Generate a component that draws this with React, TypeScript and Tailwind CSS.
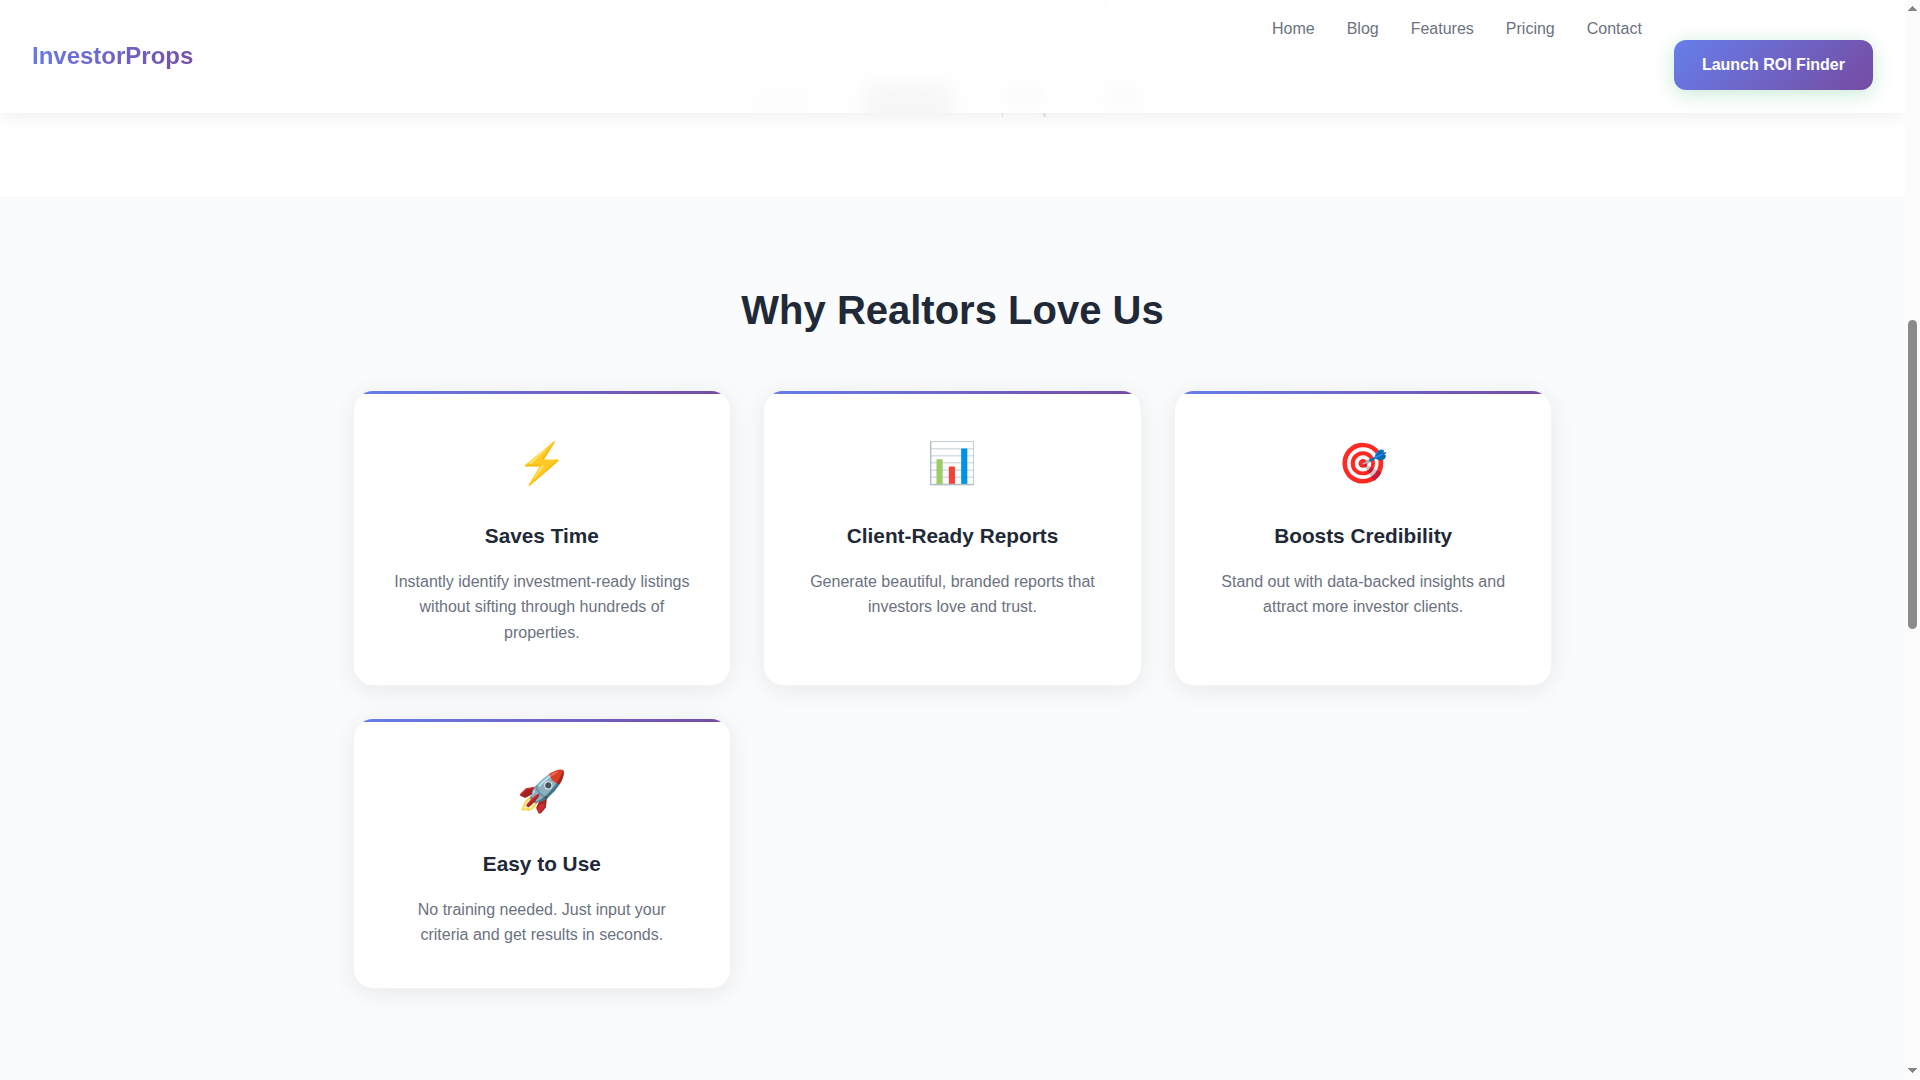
const brand = "bg-[linear-gradient(135deg,#667eea_0%,#764ba2_100%)]";

const links = ["Home", "Blog", "Features", "Pricing", "Contact"];

const features = [
  { icon: "⚡", title: "Saves Time", text: "Instantly identify investment-ready listings without sifting through hundreds of properties." },
  { icon: "📊", title: "Client-Ready Reports", text: "Generate beautiful, branded reports that investors love and trust." },
  { icon: "🎯", title: "Boosts Credibility", text: "Stand out with data-backed insights and attract more investor clients." },
  { icon: "🚀", title: "Easy to Use", text: "No training needed. Just input your criteria and get results in seconds." },
];

function Header() {
  return (
    <header className="relative z-10 flex h-[113px] shrink-0 items-start justify-between bg-white px-8 pt-4 shadow-[0_2px_20px_rgba(0,0,0,0.08)]">
      {/* Page content showing faintly through the frosted bar */}
      <div className="pointer-events-none absolute inset-0 overflow-hidden">
        <div className="absolute -top-5 left-[800px] h-[48px] w-[308px] rounded-[20px] bg-[#fefefe] blur-[1px]" />
        <div className="absolute left-[753px] top-[84px] h-10 w-[56px] rounded-full bg-[#fdfdfd] blur-[4px]" />
        <div className="absolute left-[862px] top-[82px] h-[60px] w-[92px] rounded-xl bg-[#f7f7f7] blur-[10px]" />
        <div className="absolute left-[1000px] top-[82px] h-7 w-[48px] rounded-full bg-[#fcfcfc] blur-[6px]" />
        <div className="absolute left-[1100px] top-[82px] h-8 w-[46px] rounded-full bg-[#fcfcfc] blur-[7px]" />
      </div>
      <div className={"relative mt-[20.8px] bg-clip-text text-2xl leading-[38.4px] font-bold text-transparent " + brand}>
        InvestorProps
      </div>
      <nav className="relative flex items-start gap-8">
        {links.map((l) => (
          <a key={l} className="leading-[25.6px] font-medium text-[#6b7280]">{l}</a>
        ))}
        <button className={"mt-6 rounded-xl px-7 py-3 leading-[25.6px] font-semibold text-white shadow-[0_4px_20px_rgba(72,187,120,0.3)] " + brand}>
          Launch ROI Finder
        </button>
      </nav>
    </header>
  );
}

function FeatureCard({ icon, title, text }: { icon: string; title: string; text: string }) {
  return (
    <div className="relative overflow-hidden rounded-[20px] border border-[#f3f4f6] bg-white p-10 text-center shadow-[0_4px_25px_rgba(0,0,0,0.08)]">
      <div className="absolute inset-x-0 top-0 h-[3px] bg-[linear-gradient(135deg,#667eea_0%,#764ba2_100%)]" />
      <div className="mb-6 text-[40px] leading-[64px] text-[#1f2937]">{icon}</div>
      <h3 className="mb-4 text-[20.8px] leading-[33.28px] font-bold text-[#1f2937]">{title}</h3>
      <p className="text-base leading-[25.6px] text-[#6b7280]">{text}</p>
    </div>
  );
}

function Scrollbar() {
  return (
    <div className="relative z-20 flex w-[15px] shrink-0 flex-col items-center bg-[#fcfcfc]">
      <svg className="mt-[6px] h-[5px] w-[9px]" viewBox="0 0 9 5" fill="#858585" shapeRendering="crispEdges">
        <path d="M4 0h1v1h1v1h1v1h1v1h1v1H0V4h1V3h1V2h1V1h1z" />
      </svg>
      <div className="mt-[309px] h-[309px] w-[9px] rounded-full bg-[#8b8b8b]" />
      <svg className="mt-auto mb-[7px] h-[5px] w-[9px]" viewBox="0 0 9 5" fill="#858585" shapeRendering="crispEdges">
        <path d="M0 0h9v1H8v1H7v1H6v1H5v1H4V4H3V3H2V2H1V1H0z" />
      </svg>
    </div>
  );
}

export default function App() {
  return (
    <div className="flex h-[1080px] w-[1920px] overflow-hidden bg-white font-['Liberation_Sans',sans-serif] text-base">
      <div className="flex min-w-0 flex-1 flex-col">
        <Header />
        <div className="relative h-[84.3px] shrink-0 bg-white">
          <div className="absolute left-[1002px] top-0 h-1 w-px bg-[#e6e6e6]" />
          <div className="absolute left-[1043px] top-0 h-1 w-[3px] bg-[#ececec]" />
        </div>
        <main className="flex-1 border-t border-[#f3f4f6] bg-[#fafbfd] pt-20">
          <h2 className="mb-12 text-center text-[40px] leading-[64px] font-bold text-[#1f2937]">Why Realtors Love Us</h2>
          <div className="mx-auto grid w-[1200px] grid-cols-3 gap-8">
            {features.map((f) => (
              <FeatureCard key={f.title} {...f} />
            ))}
          </div>
        </main>
      </div>
      <Scrollbar />
    </div>
  );
}
